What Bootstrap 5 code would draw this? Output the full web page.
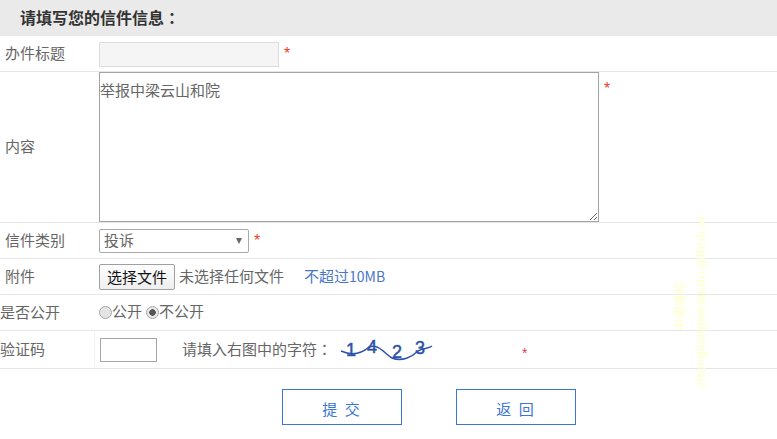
<!DOCTYPE html>
<html lang="zh">
<head>
<meta charset="utf-8">
<title>信件信息</title>
<link href="https://cdn.jsdelivr.net/npm/bootstrap@5.3.0/dist/css/bootstrap.min.css" rel="stylesheet">
<style>
html,body{height:439px;overflow:hidden}
body{font-family:"Noto Sans CJK SC","Liberation Sans",sans-serif;font-size:15px;color:#666;background:#fff;position:relative}
.form-head{height:36px;background:#eaeaea;padding-left:20px;font-size:16px;font-weight:700;color:#333;line-height:35px}
.cn-colon{font-family:"Noto Sans CJK TC",sans-serif}
.line-row{border-bottom:1px solid #e6e6e6;display:flex;align-items:center}
.r1{height:36px}.r2{height:151px;align-items:stretch}.r3,.r4,.r5{height:36px}.r6{height:38px}
.lab{width:99px;flex:none;padding-left:5px;line-height:20px;padding-bottom:2px}
.lab-flush{padding-left:0}
.r2 .lab{display:flex;align-items:center}
.lab-div{width:95px;height:100%;display:flex;align-items:center;border-right:1px solid #f2f2f2;margin-right:5px}
.req{color:#e8442a;margin-left:5px;font-family:"Liberation Sans",sans-serif;font-size:16px}
.req-code{margin-left:88px;margin-top:7px;font-size:14px;color:#d9414a}
.title-input{width:180px;height:25px;background:#f5f5f5;border:1px solid #ddd;margin-top:1px;display:block}
.msg-area{width:500px;height:150px;border:1px solid #a3a3a3;padding:7px 0 0 0;color:#666;font:15px/20px "Noto Sans CJK SC",sans-serif;resize:both;display:block;outline:none}
.req-top{align-self:flex-start;margin:5px 0 0 5px}
.sel-box{width:150px;height:24px;border:1px solid #a9a9a9;border-radius:2px;background:#fff;color:#666;padding:0 0 2px 4px;display:flex;align-items:center;justify-content:space-between;line-height:20px}
.sel-arrow{width:0;height:0;border-left:3.5px solid transparent;border-right:3.5px solid transparent;border-top:6px solid #666;margin:2px 6px 0 0}
.file-btn{width:76px;height:26px;border:1px solid #a0a0a0;border-radius:2px;background:linear-gradient(#fff,#efefef);color:#111;font-size:15px;padding:0;line-height:22px;margin-right:4px}
.hint-blue{color:#4a76c8;margin-left:20px}
.hint-num{font-size:14px}
.fake-radio{width:13px;height:13px;border-radius:50%;border:1px solid #a6a6a6;background:#e4e4e4;display:inline-block;vertical-align:-2px}
.fake-radio.on{background:radial-gradient(circle,#555 0 3px,#e8e8e8 3.5px)}
.radio-wrap{margin-right:4px}
.radio-line{position:relative;top:-1px}
.code-input{width:57px;height:24px;border:1px solid #a6a6a6;display:block;flex:none}
.code-tip{margin-left:25px;width:158px;flex:none}
.btn-line{display:flex;padding-left:282px;gap:54px;margin-top:20px}
.act{width:120px;height:36px;border:1px solid #3a76d2;border-radius:0;background:#fff;color:#3a76d2;font-size:15px;letter-spacing:2px;padding:0;line-height:38px}
.mark-a,.mark-b{position:absolute;white-space:nowrap;pointer-events:none;transform:rotate(-90deg);transform-origin:0 0;color:#ffffcc}
.mark-a{left:694px;top:388px;font:13.6px/14px "Liberation Sans",sans-serif}
.mark-b{left:674px;top:331px;font:12.5px/12px "Noto Sans CJK SC",sans-serif}
</style>
</head>
<body>
<div class="form-head">请填写您的信件信息<span class="cn-colon" lang="zh-TW">：</span></div>
<div class="line-row r1"><div class="lab">办件标题</div><input class="title-input" disabled aria-label="办件标题"><span class="req">*</span></div>
<div class="line-row r2"><div class="lab">内容</div><textarea class="msg-area" aria-label="内容">举报中梁云山和院</textarea><span class="req req-top">*</span></div>
<div class="line-row r3"><div class="lab">信件类别</div><div class="sel-box">投诉<span class="sel-arrow"></span></div><span class="req">*</span></div>
<div class="line-row r4"><div class="lab">附件</div><button class="file-btn" type="button">选择文件</button><span>未选择任何文件</span><span class="hint-blue">不超过<span class="hint-num">10MB</span></span></div>
<div class="line-row r5"><div class="lab lab-flush">是否公开</div><span class="radio-wrap radio-line"><span class="fake-radio"></span>公开</span><span class="radio-line"><span class="fake-radio on"></span>不公开</span></div>
<div class="line-row r6"><div class="lab-div">验证码</div><div class="code-input"></div><div class="code-tip">请填入右图中的字符<span class="cn-colon" lang="zh-TW">：</span></div>
<svg width="94" height="24" viewBox="0 0 94 24" role="img" aria-label="验证码图片">
<g fill="#2f52a8" stroke="#2f52a8" stroke-width=".5">
<text x="6" y="18" font-family="Liberation Sans,sans-serif" font-size="18">1</text>
<text x="27" y="15" font-family="Liberation Sans,sans-serif" font-size="18">4</text>
<text x="52" y="20" font-family="Liberation Sans,sans-serif" font-size="18">2</text>
<text x="75" y="16" font-family="Liberation Sans,sans-serif" font-size="18">3</text>
</g>
<path d="M1 13C10 17 20 17 29 9C38 5 45 16 52 20C62 24 72 19 78 13C83 10 88 11 92 8" fill="none" stroke="#2f52a8" stroke-width="1.5"/>
</svg>
<span class="req req-code">*</span></div>
<div class="btn-line"><button class="act" type="button">提 交</button><button class="act" type="button">返 回</button></div>
<div class="mark-a">zhongliangweiquan.github.io</div>
<div class="mark-b">中梁维权</div>
<script src="https://cdn.jsdelivr.net/npm/bootstrap@5.3.0/dist/js/bootstrap.bundle.min.js"></script>
</body>
</html>
